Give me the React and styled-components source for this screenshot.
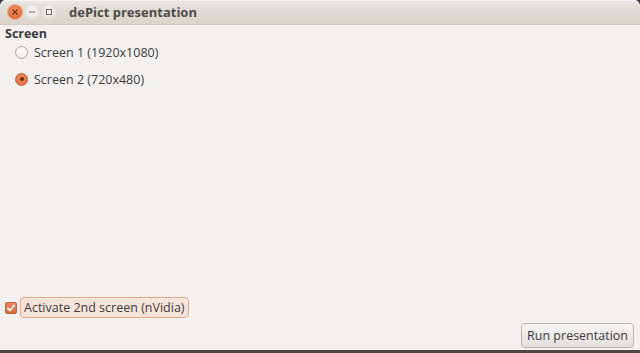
import styled, { createGlobalStyle } from "styled-components"

// dePict presentation window (Ubuntu/Ambiance look)

const Global = createGlobalStyle`
  html, body { margin: 0; padding: 0; background: #3a3a3a; }
  body { font-family: "Open Sans", "DejaVu Sans", sans-serif; }
`

export default function App() {
  return (
    <>
      <Global />
      <Window>
        <TitleBar>
          <Controls>
            <CircleButton $close>
              <svg width="8" height="8" viewBox="0 0 8 8">
                <path d="M1.5 1.5 L6.5 6.5 M6.5 1.5 L1.5 6.5" stroke="#7a2a10" strokeWidth="1.3" />
              </svg>
            </CircleButton>
            <CircleButton>
              <svg width="8" height="8" viewBox="0 0 8 8">
                <path d="M1 4 H7" stroke="#6a6762" strokeWidth="1.2" />
              </svg>
            </CircleButton>
            <CircleButton>
              <svg width="8" height="8" viewBox="0 0 8 8">
                <rect x="1.5" y="1.5" width="5" height="5" fill="none" stroke="#6a6762" strokeWidth="1" />
              </svg>
            </CircleButton>
          </Controls>
          <Title>dePict presentation</Title>
        </TitleBar>

        <Body>
          <SectionLabel>Screen</SectionLabel>
          <RadioList>
            <RadioRow>
              <Radio />
              Screen 1 (1920x1080)
            </RadioRow>
            <RadioRow>
              <Radio $checked />
              Screen 2 (720x480)
            </RadioRow>
          </RadioList>

          <Spacer />

          <CheckRow>
            <Check>
              <svg width="10" height="10" viewBox="0 0 10 10">
                <path d="M1.5 5 L4 7.5 L8.5 2" fill="none" stroke="#fff" strokeWidth="1.8" />
              </svg>
            </Check>
            <CheckLabel>Activate 2nd screen (nVidia)</CheckLabel>
          </CheckRow>

          <Footer>
            <Button>Run presentation</Button>
          </Footer>
        </Body>
      </Window>
      <Desktop />
    </>
  )
}

const Window = styled.div`
  width: 640px;
  height: 350px;
  display: flex;
  flex-direction: column;
  background: #f2f1f0;
  border-radius: 6px 6px 0 0;
  overflow: hidden;
`

const Desktop = styled.div`
  height: 3px;
  background: #4a4744;
`

const TitleBar = styled.div`
  height: 25px;
  display: flex;
  align-items: center;
  padding-left: 8px;
  background: linear-gradient(#ebe8e4, #e0dbd5 40%, #dbd5ce);
  border-bottom: 1px solid #d3ccc4;
  box-shadow: inset 0 1px 0 #f5f3f1;
  box-sizing: border-box;
`

const Controls = styled.div`
  display: flex;
  gap: 3px;
  margin-right: 13px;
`

const CircleButton = styled.div`
  width: 14px;
  height: 14px;
  border-radius: 50%;
  display: flex;
  align-items: center;
  justify-content: center;
  background: ${p => p.$close
    ? "radial-gradient(circle at 50% 40%, #f59a6c, #e26a36 70%, #d45a28)"
    : "radial-gradient(circle at 50% 40%, #f8f7f5, #e6e2de 70%, #d6d1cb)"};
  box-shadow: 0 0 0 1px ${p => p.$close ? "#e9a886" : "#e2ded9"};
`

const Title = styled.div`
  font-size: 13px;
  font-weight: 700;
  color: #4f4c48;
`

const Body = styled.div`
  flex: 1;
  display: flex;
  flex-direction: column;
  padding: 1px 6px 2px 5px;
  font-size: 12.5px;
  color: #3c3c3c;
`

const SectionLabel = styled.div`
  font-weight: 700;
  height: 16px;
  line-height: 16px;
`

const RadioList = styled.div`
  display: flex;
  flex-direction: column;
  gap: 9px;
  padding-left: 10px;
  margin-top: 1px;
`

const RadioRow = styled.label`
  display: flex;
  align-items: center;
  gap: 6px;
  height: 18px;
`

const Radio = styled.span`
  width: 13px;
  height: 13px;
  border-radius: 50%;
  box-sizing: border-box;
  position: relative;
  border: 1px solid ${p => p.$checked ? "#c2623a" : "#aaa59f"};
  background: ${p => p.$checked
    ? "radial-gradient(circle at 50% 40%, #f08a5c, #de6a38)"
    : "linear-gradient(#ffffff, #ebe9e6)"};

  &::after {
    content: "";
    display: ${p => p.$checked ? "block" : "none"};
    position: absolute;
    left: 3.5px;
    top: 3.5px;
    width: 4px;
    height: 4px;
    border-radius: 50%;
    background: #6e2a12;
  }
`

const Spacer = styled.div`
  flex: 1;
`

const CheckRow = styled.div`
  display: flex;
  align-items: center;
  gap: 3px;
  margin-bottom: 5px;
`

const Check = styled.span`
  width: 12px;
  height: 12px;
  border-radius: 2px;
  box-sizing: border-box;
  border: 1px solid #c2623a;
  background: linear-gradient(#ee8658, #dc6634);
  display: flex;
  align-items: center;
  justify-content: center;
`

const CheckLabel = styled.span`
  padding: 1px 3px;
  border: 1px solid #e3a88a;
  border-radius: 4px;
  background: #f6e3da;
`

const Footer = styled.div`
  display: flex;
  justify-content: flex-end;
`

const Button = styled.button`
  font: inherit;
  color: #3c3c3c;
  height: 25px;
  padding: 0 5px;
  border: 1px solid #b9b4ae;
  border-radius: 4px;
  background: linear-gradient(#f6f5f4, #e2dfdb);
  box-shadow: inset 0 1px 0 #fff;
`
